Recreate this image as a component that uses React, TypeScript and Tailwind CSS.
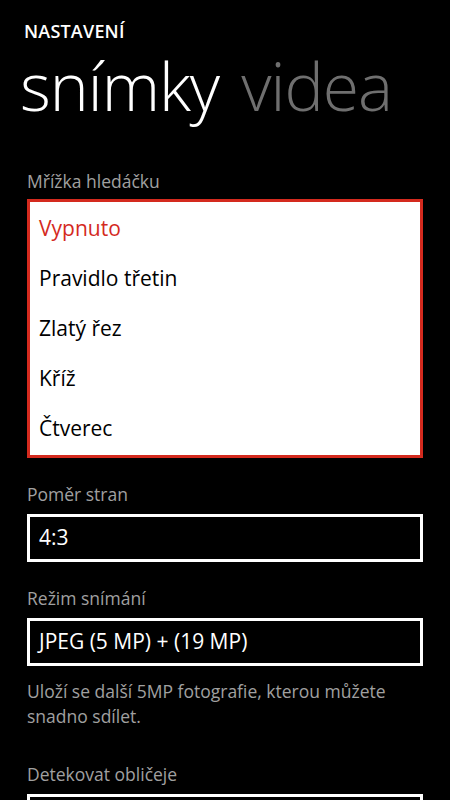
const font = { fontFamily: '"Open Sans", "Noto Sans", sans-serif' };

const gridOptions = ['Vypnuto', 'Pravidlo třetin', 'Zlatý řez', 'Kříž', 'Čtverec'];

function Label({ children }: { children: React.ReactNode }) {
    return <div className="text-[17.5px] leading-[24px] text-[#a0a0a0]">{children}</div>;
}

function Picker({ value }: { value: string }) {
    return (
        <div className="mt-[8px] h-[48px] border-[3px] border-white flex items-center px-[9px] text-[21px] text-white">
            {value}
        </div>
    );
}

export default function App() {
    return (
        <div className="w-[450px] h-[800px] overflow-hidden bg-black text-white" style={font}>
            <div className="pl-[24px] pt-[22px] text-[18px] leading-[18px] font-semibold tracking-[0.2px]">NASTAVENÍ</div>
            <div className="pl-[20px] mt-[10px] flex items-baseline gap-[22px] text-[66px] leading-[70px] font-light tracking-[-1px]">
                <span className="text-white">snímky</span>
                <span className="text-[#6f6f6f]">videa</span>
            </div>

            <div className="px-[27px] mt-[49px]">
                <Label>Mřížka hledáčku</Label>
                <div className="mt-[6px] border-[3px] border-[#d42a1e] bg-white pt-[2px] pb-[1px]">
                    {gridOptions.map((o, i) => (
                        <div
                            key={o}
                            className={`h-[50px] flex items-center px-[9px] text-[21px] ${i === 0 ? 'text-[#d42a1e]' : 'text-black'}`}
                        >
                            {o}
                        </div>
                    ))}
                </div>

                <div className="mt-[24px]">
                    <Label>Poměr stran</Label>
                    <Picker value="4:3" />
                </div>

                <div className="mt-[24px]">
                    <Label>Režim snímání</Label>
                    <Picker value="JPEG (5 MP) + (19 MP)" />
                </div>

                <div className="mt-[13px] text-[17.5px] leading-[25px] text-[#a0a0a0]">
                    Uloží se další 5MP fotografie, kterou můžete snadno sdílet.
                </div>

                <div className="mt-[33px]">
                    <Label>Detekovat obličeje</Label>
                    <Picker value="" />
                </div>
            </div>
        </div>
    );
}
